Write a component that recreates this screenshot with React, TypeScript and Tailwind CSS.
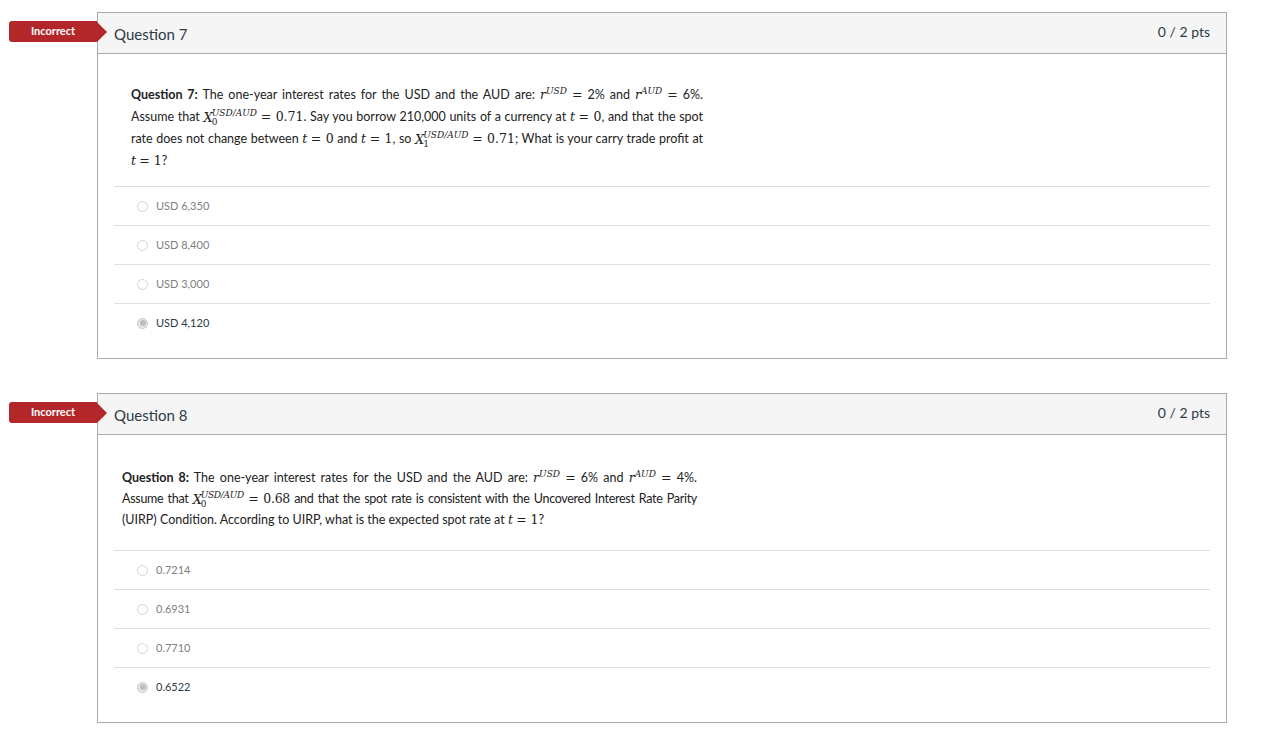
import React from "react";

type Answer = { label: string; picked?: boolean };

const ui = { fontFamily: "Lato, 'Open Sans', sans-serif" };
const body = { fontFamily: "Lato, 'Liberation Sans', sans-serif" };
const serif = { fontFamily: "'DejaVu Serif', 'Liberation Serif', serif" };

function M({ children }: { children: React.ReactNode }) {
  return (
    <span className="italic" style={serif}>
      {children}
    </span>
  );
}

function R({ sup }: { sup: string }) {
  return (
    <span className="whitespace-nowrap" style={serif}>
      <span className="italic">r</span>
      <span className="relative -top-[5px] text-[9px] italic leading-none">{sup}</span>
    </span>
  );
}

function X({ sub }: { sub: string }) {
  return (
    <span className="inline-flex h-[14px] items-center whitespace-nowrap align-middle" style={serif}>
      <span className="italic text-[13px] leading-none">X</span>
      <span className="-ml-[1px] inline-flex flex-col leading-none">
        <span className="text-[9px] italic">USD/AUD</span>
        <span className="text-[9px]">{sub}</span>
      </span>
    </span>
  );
}

function Eq({ children }: { children: React.ReactNode }) {
  return (
    <span className="whitespace-nowrap" style={serif}>
      {children}
    </span>
  );
}

function Radio({ picked }: { picked?: boolean }) {
  return (
    <span
      className={
        "flex h-[11px] w-[11px] shrink-0 items-center justify-center rounded-full border " +
        (picked ? "border-[#c8c8c8] bg-[#e6e6e6]" : "border-[#d4d4d4] bg-white")
      }
    >
      {picked && <span className="h-[6px] w-[6px] rounded-full bg-[#bdbdbd]" />}
    </span>
  );
}

function Badge() {
  return (
    <div className="absolute left-[9px] top-[9px] flex h-[21px] items-center" style={ui}>
      <div className="flex h-full w-[88px] items-center justify-center rounded-l-[3px] bg-[#b3262a] text-[11px] font-bold text-white">
        Incorrect
      </div>
      <div className="h-0 w-0 border-y-[10.5px] border-l-[10px] border-y-transparent border-l-[#b3262a]" />
    </div>
  );
}

function Question({
  num,
  children,
  answers,
  textPad,
  topPad,
  gapBelow,
}: {
  num: number;
  children: React.ReactNode;
  answers: Answer[];
  textPad: string;
  topPad: string;
  gapBelow: string;
}) {
  return (
    <div className="relative">
      <Badge />
      <div className="ml-[97px] w-[1130px] border border-[#aaaaaa] bg-white">
        <div className="flex h-[41px] items-start justify-between border-b border-[#aaaaaa] bg-[#f5f5f5] pl-[16px] pr-[16px]" style={ui}>
          <span className="pt-[10px] text-[15px] text-[#2d3b45]">Question {num}</span>
          <span className="pt-[8px] text-[14px] text-[#2d3b45]">0 / 2 pts</span>
        </div>
        <div className="px-[16px] pb-[16px]">
          <div className={textPad + " " + topPad + " " + gapBelow + " text-[12.5px] text-[#222]"} style={body}>
            {children}
          </div>
          {answers.map((a, i) => (
            <div key={i} className="flex h-[39px] items-center gap-[8px] border-t border-[#dedede] pl-[23px]" style={ui}>
              <Radio picked={a.picked} />
              <span className={"text-[11px] " + (a.picked ? "text-[#2d3b45]" : "text-[#808080]")}>{a.label}</span>
            </div>
          ))}
        </div>
      </div>
    </div>
  );
}

function Line({ w, h, children, last }: { w: string; h: string; children: React.ReactNode; last?: boolean }) {
  return (
    <div
      className={w + " " + h + " overflow-visible whitespace-nowrap " + (last ? "text-left" : "text-justify [text-align-last:justify]")}
    >
      {children}
    </div>
  );
}

export default function App() {
  return (
    <div className="min-h-screen w-full bg-white pt-[12px]">
      <Question
        num={7}
        textPad="pl-[17px]"
        topPad="pt-[30px]"
        gapBelow="pb-[14px]"
        answers={[
          { label: "USD 6,350" },
          { label: "USD 8,400" },
          { label: "USD 3,000" },
          { label: "USD 4,120", picked: true },
        ]}
      >
        <div className="leading-[22px]">
          <Line w="w-[572px]" h="h-[22px]">
            <b>Question 7:</b> The one-year interest rates for the USD and the AUD are: <R sup="USD" /> <Eq>=</Eq> 2% and{" "}
            <R sup="AUD" /> <Eq>=</Eq> 6%.
          </Line>
          <Line w="w-[572px]" h="h-[22px]">
            Assume that <X sub="0" /> <Eq>= 0.71</Eq>. Say you borrow 210,000 units of a currency at <M>t</M> <Eq>= 0</Eq>, and that the spot
          </Line>
          <Line w="w-[572px]" h="h-[22px]">
            rate does not change between <M>t</M> <Eq>= 0</Eq> and <M>t</M> <Eq>= 1</Eq>, so <X sub="1" /> <Eq>= 0.71</Eq>; What is your carry trade profit at
          </Line>
          <Line w="w-[572px]" h="h-[22px]" last>
            <M>t</M> <Eq>= 1</Eq>?
          </Line>
        </div>
      </Question>

      <div className="h-[34px]" />

      <Question
        num={8}
        textPad="pl-[8px]"
        topPad="pt-[32px]"
        gapBelow="pb-[20px]"
        answers={[
          { label: "0.7214" },
          { label: "0.6931" },
          { label: "0.7710" },
          { label: "0.6522", picked: true },
        ]}
      >
        <div className="leading-[21px]">
          <Line w="w-[575px]" h="h-[21px]">
            <b>Question 8:</b> The one-year interest rates for the USD and the AUD are: <R sup="USD" /> <Eq>=</Eq> 6% and{" "}
            <R sup="AUD" /> <Eq>=</Eq> 4%.
          </Line>
          <Line w="w-[575px]" h="h-[21px]">
            <span className="tracking-[-0.3px]">
              Assume that <X sub="0" /> <Eq>= 0.68</Eq> and that the spot rate is consistent with the Uncovered Interest Rate Parity
            </span>
          </Line>
          <Line w="w-[575px]" h="h-[21px]" last>
            (UIRP) Condition. According to UIRP, what is the expected spot rate at <M>t</M> <Eq>= 1</Eq>?
          </Line>
        </div>
      </Question>
    </div>
  );
}
